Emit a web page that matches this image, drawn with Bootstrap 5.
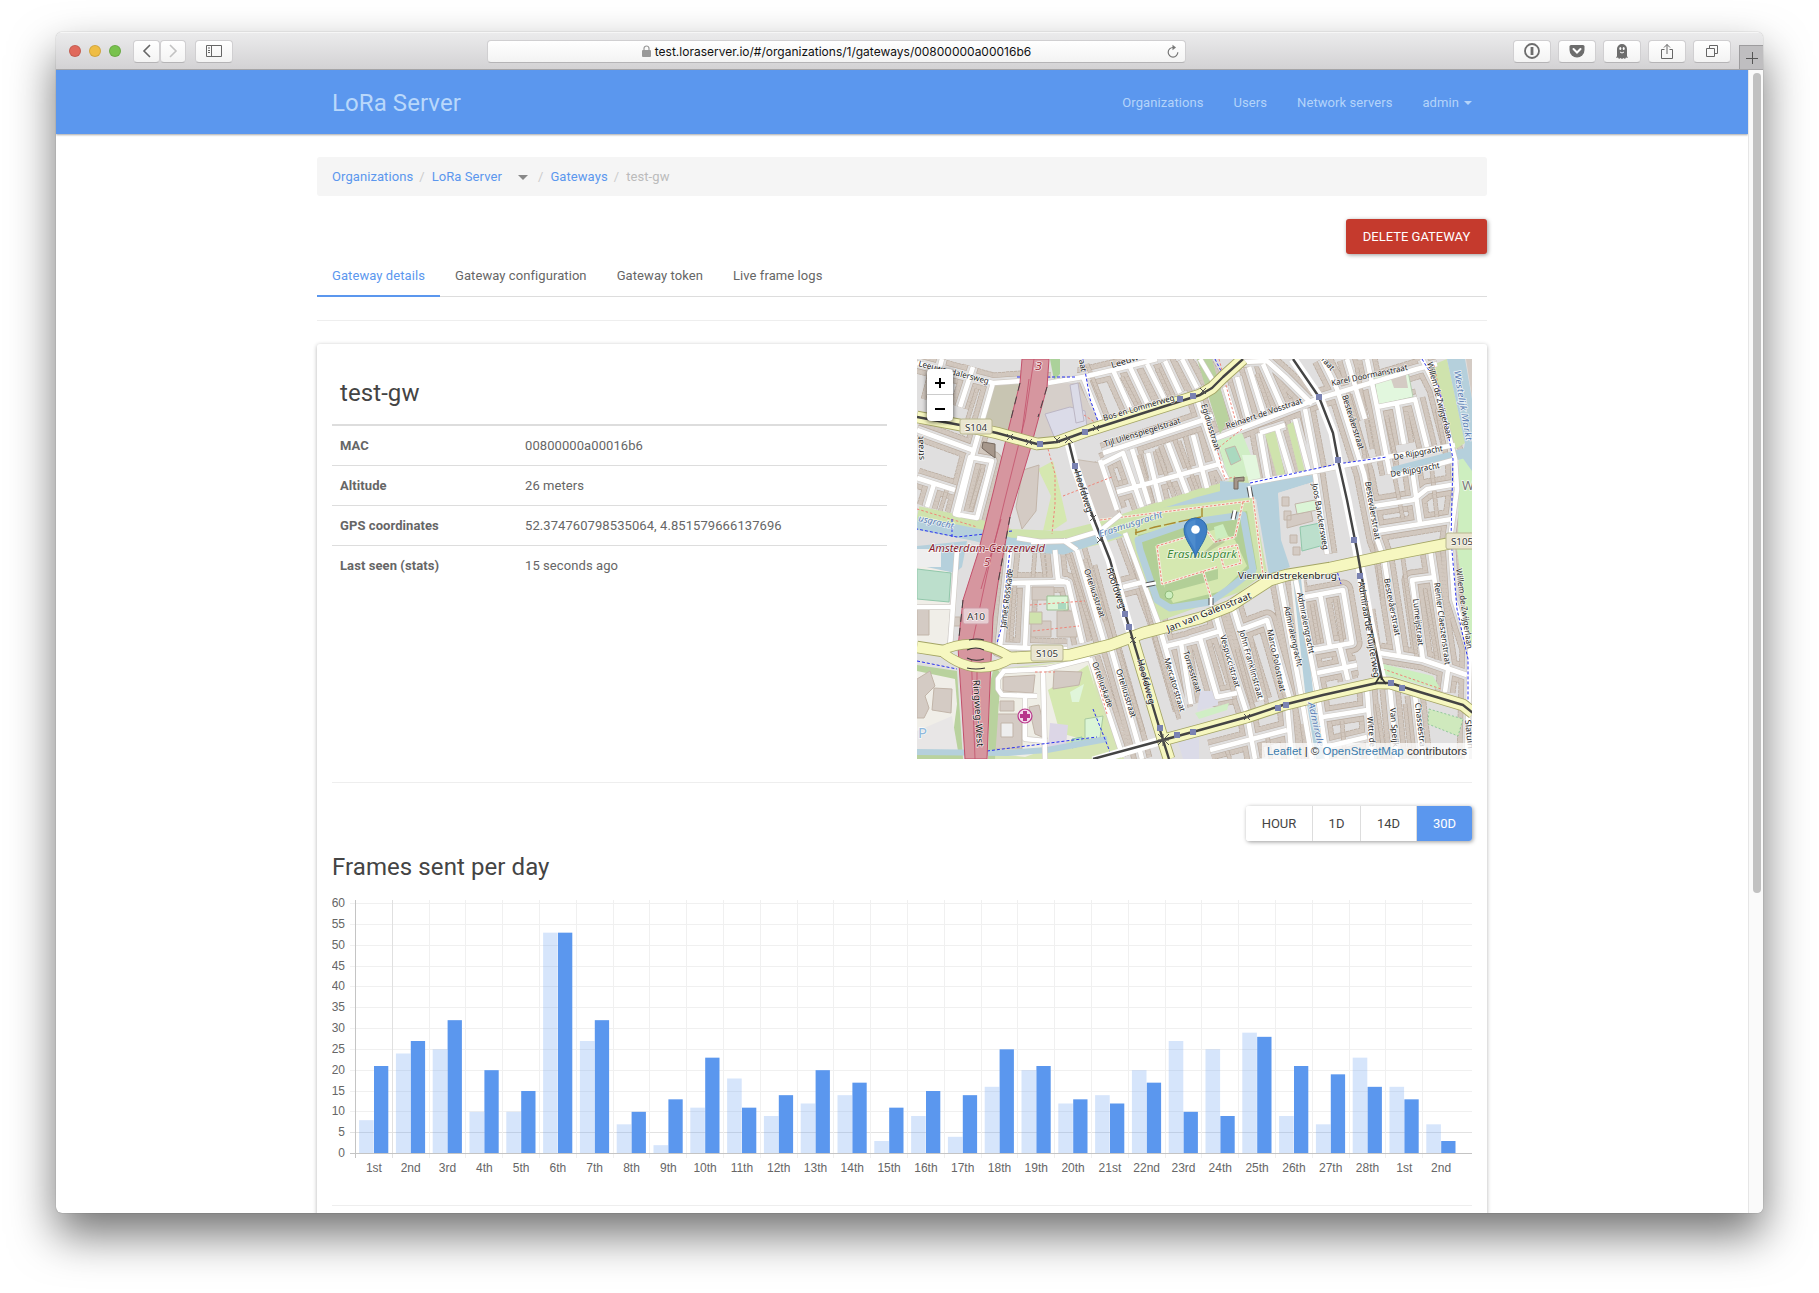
<!DOCTYPE html>
<html lang="en">
<head>
<meta charset="utf-8">
<title>LoRa Server</title>
<link href="https://cdn.jsdelivr.net/npm/bootstrap@5.3.0/dist/css/bootstrap.min.css" rel="stylesheet">
<style>
body{background:#fff;overflow:hidden;height:1293px;font:13px/24px Roboto,sans-serif;letter-spacing:.08px;color:#666}
.app-window{margin:32px 0 0 56px;width:1707px;height:1181px;border-radius:6px;overflow:hidden;background:#fff;box-shadow:0 0 1px rgba(0,0,0,.5),0 22px 45px rgba(0,0,0,.55)}
.chrome-bar{height:38px;background:linear-gradient(#ebebec,#d3d2d4);border-top:1px solid #f6f6f6;border-bottom:1px solid #a5a4a6;padding-left:13px;letter-spacing:0}
.light{width:12px;height:12px;border-radius:50%;margin-right:8px;border:1px solid rgba(0,0,0,.12)}
.cbtn{height:23px;border-radius:4px;background:linear-gradient(#fff,#f3f3f3);border:1px solid #d0cfd1;border-bottom-color:#b5b4b6;display:flex;align-items:center;justify-content:center}
.cbtn svg,.plus-tab svg{display:block}
.url-bar{width:699px;position:relative;font:12px Inter,sans-serif;color:#111}
.url-bar .reload{position:absolute;right:4px;top:3px}
.plus-tab{width:24px;height:24px;background:#bfbec0;border:1px solid #9d9c9e;border-width:1px 0 0 1px}
.viewport{height:1143px}
.page{width:1692px;overflow:hidden}
.scroll-track{width:15px;background:#fafafa;border-left:1px solid #e6e6e6;padding:3px 3px 0 4px}
.thumb{height:820px;width:8px;border-radius:4px;background:#c1c1c1}
.container{max-width:1170px;padding:0}
.navbar{height:64px;background:#5b97ee;padding:2px 0 0;box-shadow:0 1px 2px rgba(0,0,0,.35);position:relative}
.navbar-brand{font-size:24px;color:#b9d8fb!important;margin:0;padding:0 15px}
.navbar .nav-link{color:#b4d4fa!important;padding:0 15px!important}
.dropdown-toggle::after{vertical-align:2px;margin-left:5px;border-width:4px 4px 0}
.breadcrumb{background:#f5f5f5;height:39px;border-radius:3px;margin:23px 0;padding:8px 15px;line-height:23px}
.breadcrumb a,.nav-tabs .active{color:#5b97ee!important;text-decoration:none}
.breadcrumb-item+.breadcrumb-item{padding-left:6px}
.breadcrumb-item+.breadcrumb-item::before{color:#ccc;padding-right:7px}
.breadcrumb-item.active{color:#bbb}
.tri{border:5px solid transparent;border-top-color:#888;border-bottom:0;display:inline-block;vertical-align:middle;margin:0 4px 0 16px}
.btn{font-size:13px;text-transform:uppercase;border:0;height:35px;padding:0 15px;letter-spacing:0;line-height:35px;border-radius:3px}
.btn-danger{background:#c53a2d;box-shadow:1px 1px 4px rgba(0,0,0,.4);width:141px}
.nav-tabs{border-bottom:1px solid #ddd;height:43px}
.nav-tabs .nav-link{color:#666;border:0;padding:10px 15px 9px;height:43px;border-radius:0;margin:0}
.nav-tabs .nav-link.active{background:none;box-shadow:inset 0 -2px 0 #5b97ee}
hr{border-top:1px solid #eee;opacity:1;margin:23px 0}
.card{border:0;border-radius:3px;box-shadow:0 1px 4px rgba(0,0,0,.3);padding:15px;height:900px;color:#666}
h2,h3{font-size:24px;font-weight:400;color:#444;line-height:26px}
h2{margin:21px 0 18px 8px}
h3{margin:13px 0 18px}
.table{--bs-table-color:#666;border-top:2px solid #ddd;margin:0}
.table td,.table th{height:40px;padding:8px;line-height:23px;border-bottom:1px solid #ddd;background:none;color:#666}
.table tr:last-child>*{border-bottom:0}
.table th{width:185px;font-weight:700}
.map-box{width:555px;height:400px;position:relative;overflow:hidden;background:#e0dfdf}
.zoom-ctl{position:absolute;left:10px;top:10px;width:26px;background:#fff;border-radius:4px;box-shadow:0 1px 5px rgba(0,0,0,.65);height:52px}
.zoom-ctl div{height:26px;display:flex;align-items:center;justify-content:center;padding-top:2px}
.zoom-ctl div:first-child{border-bottom:1px solid #ccc}
.attrib{position:absolute;right:0;bottom:0;background:rgba(255,255,255,.75);font:11.5px/16px "Liberation Sans",sans-serif;letter-spacing:0;color:#333;padding:0 5px}
.attrib span{color:#3a7cad}
.btn-group{box-shadow:1px 1px 4px rgba(0,0,0,.4);border-radius:3px}
.btn-group .btn{background:#fff;color:#444;border-right:1px solid #ddd;padding:0;margin:0!important}
.btn-group .btn.active{background:#5b97ee;color:#fff;border:0}
.map-box path,.map-box polygon{stroke-linejoin:round}
.map-box text{font-family:"Noto Sans",sans-serif;letter-spacing:0;paint-order:stroke;stroke-width:1.4px;stroke:rgba(255,255,255,.75)}
.chart text{font:12px "Liberation Sans",sans-serif;letter-spacing:0;fill:#666}
</style>
<script src="https://cdn.jsdelivr.net/npm/bootstrap@5.3.0/dist/js/bootstrap.bundle.min.js"></script>
</head>
<body>
<div class="app-window">
 <div class="chrome-bar d-flex align-items-center">
  <div class="light" style="background:#e0695c"></div><div class="light" style="background:#efbd45"></div><div class="light" style="background:#78c24d;margin-right:12px"></div>
  <div class="cbtn" style="width:27px"><svg width="10" height="16" fill="none" stroke="#666" stroke-width="1.6"><path d="M8 2L2 8l6 6"/></svg></div>
  <div class="cbtn" style="width:26px"><svg width="10" height="16" fill="none" stroke="#c2c2c2" stroke-width="1.6"><path d="M2 2l6 6-6 6"/></svg></div>
  <div class="cbtn" style="width:38px;margin-left:9px"><svg width="16" height="12" fill="none" stroke="#666"><path d="M.5.5h15v11H.5zM5.5 0v12M2 3h2M2 5.500h2M2 7.500h2"/></svg></div>
  <div class="cbtn url-bar" style="margin-left:254px"><svg width="9" height="12" class="me-1"><rect y="5" width="9" height="7" rx="1" fill="#999"/><path d="M2 5.500V3.500a2.500 2.500 0 0 1 5 0v2" fill="none" stroke="#999" stroke-width="1.200"/></svg><span id="url">test.loraserver.io/#/organizations/1/gateways/00800000a00016b6</span>
   <svg class="reload" width="15" height="16" fill="none" stroke="#777" stroke-width="1.200"><path d="M7 3.500a4.800 4.800 0 1 0 4.800 4.800"/><path d="M6.500.7l3.500 2.800-3.500 2.800z" fill="#777" stroke="none"/></svg></div>
  <div class="cbtn" style="width:38px;margin-left:327px"><svg width="18" height="18" fill="none" stroke="#6d6d6d"><circle cx="9" cy="9" r="7" stroke-width="1.800"/><path d="M9 5v8" stroke-width="2.800"/></svg></div>
  <div class="cbtn" style="width:38px;margin-left:7px"><svg width="18" height="16"><path d="M3 2h12q1.500 0 1.500 1.500V7A7.500 7.500 0 0 1 1.500 7V3.500Q1.500 2 3 2z" fill="#6d6d6d"/><path d="M5.500 6L9 9.500 12.500 6" fill="none" stroke="#fff" stroke-width="2" stroke-linecap="round"/></svg></div>
  <div class="cbtn" style="width:38px;margin-left:7px"><svg width="14" height="17"><path d="M2 6a5 5 0 0 1 10 0v7l1 2-2-.5-1 1.500-1.500-1L7 16l-1.500-1L4 16l-1-1.500L1 15l1-2z" fill="#6d6d6d"/><ellipse cx="5.300" cy="5.500" rx="1" ry="1.600" fill="#fff"/><ellipse cx="8.700" cy="5.500" rx="1" ry="1.600" fill="#fff"/><path d="M5 9q2 2 4 0" stroke="#fff" fill="none"/></svg></div>
  <div class="cbtn" style="width:38px;margin-left:7px"><svg width="14" height="17" fill="none" stroke="#666"><path d="M4.500 6.500h-3v9h11v-9h-3M7 11V1.500M4 4.500l3-3 3 3"/></svg></div>
  <div class="cbtn" style="width:38px;margin-left:7px"><svg width="14" height="14" fill="none" stroke="#666"><path d="M1.500 4.500h8v8h-8zM4.500 4V1.500h8v8H10"/></svg></div>
  <div class="plus-tab ms-auto align-self-end d-flex align-items-center justify-content-center"><svg width="12" height="12" stroke="#555"><path d="M0 6.500h12M6.500 0v12"/></svg></div>
 </div>
 <div class="viewport d-flex">
  <div class="page">
   <nav class="navbar navbar-expand"><div class="container"><a class="navbar-brand">LoRa Server</a>
    <div class="navbar-nav"><a class="nav-link">Organizations</a><a class="nav-link">Users</a><a class="nav-link">Network servers</a><a class="nav-link dropdown-toggle">admin</a></div></div></nav>
   <div class="container">
    <ol class="breadcrumb"><li class="breadcrumb-item"><a>Organizations</a></li><li class="breadcrumb-item"><a>LoRa Server</a><span class="tri"></span></li><li class="breadcrumb-item"><a>Gateways</a></li><li class="breadcrumb-item active">test-gw</li></ol>
    <div class="d-flex justify-content-end"><button class="btn btn-danger">Delete gateway</button></div>
    <ul class="nav nav-tabs"><li><a class="nav-link active">Gateway details</a></li><li><a class="nav-link">Gateway configuration</a></li><li><a class="nav-link">Gateway token</a></li><li><a class="nav-link">Live frame logs</a></li></ul>
    <hr>
    <div class="card">
     <div class="d-flex justify-content-between">
      <div style="width:555px"><h2>test-gw</h2>
       <table class="table"><tbody><tr><th>MAC</th><td>00800000a00016b6</td></tr><tr><th>Altitude</th><td>26 meters</td></tr><tr><th>GPS coordinates</th><td>52.374760798535064, 4.851579666137696</td></tr><tr><th>Last seen (stats)</th><td>15 seconds ago</td></tr></tbody></table></div>
      <div class="map-box">
<svg width="555" height="400" viewBox="0 0 555 400" fill="none">
<defs>
<g id="res">
<path d="M0 4L76 24 105 22M76 24L56 94 40 158M0 71L58 92M0 119L38 131M17 125L10 148M43 48L56 8M25 0L14 42M53 98L75 102 60 159 38 155z"/>
<path d="M131 24L166 18 200 10 240 0M166 18L186 68M196 11L213 49M213 8L230 44M230 5L247 39M248 2L263 34M265 0L280 29M283 0L296 22"/>
<path d="M186 94L283 62 296 57M186 104L206 94 225 148M200 133L306 104M231 94L243 143M251 84L270 134M276 76L290 129M215 90L232 145M183 101L200 151"/>
<path d="M280 40L302 105 310 120M297 80L400 40 500 10 520 5M308 28L320 66M320 18L332 62M332 8L347 56M346 5L365 48M326 3L350 2 368 18 395 45M343 74L351 119M343 74L368 66M360 69L374 116M378 60L392 113M388 50L400 112"/>
<path d="M405 0L420 30 447 115 460 180 467 200 482 295M430 0L448 60M450 0L460 48 473 115M460 48L500 40M480 46L487 85M498 40L510 88M505 0L520 30 538 100 540 130 533 180 537 240 553 290 550 400M495 110L503 164M458 147L496 141 510 130 540 125M460 172L535 160M398 115L410 195"/>
<path d="M388 238L426 231 435 284 396 291M403 235L413 288M400 314L440 306M423 288L431 321M363 223L383 330 395 400M378 217L400 330 410 400M316 248L323 271 350 261 373 341M323 271L345 341M273 281L303 272 298 254M283 279L300 338 320 334M303 272L330 355M331 361L338 400M293 391L370 371M370 345L375 400M406 358L450 351M450 330L455 400M408 388L450 378M473 330L480 400M498 336L505 400M463 294L506 301 550 316M518 218L495 221 506 301M513 191L531 311 528 333"/>
<path d="M160 191L187 283M193 286L222 388 225 400M138 191L141 221 151 224 165 284M93 224L151 223M111 224L108 288M93 191L83 288 150 290M173 299L206 398M206 228L226 223M208 174L241 263 266 350M246 288L283 279M264 284L274 345M146 181L160 191"/>
</g>
<path id="rows" d="M201 152L216 200 240 285 262 360M178 206L204 300 226 372M168 200L188 262M150 192L172 262M430 30L446 85 456 160 466 240M412 60L436 160 450 240M388 130L396 185M440 10L455 90M520 50L530 100M470 60L480 105M478 120L486 160M515 112L520 158M456 250L462 290M486 200L500 300M508 230L520 300M305 285L318 340M335 285L350 345M320 290L335 345M355 290L368 338M395 245L402 285M418 240L425 284M460 345L468 400M488 345L494 400M425 362L428 400M385 365L390 400M350 375L354 400M310 392L313 400M205 18L224 55M240 10L256 45M170 5L184 40M240 90L258 140M222 96L236 144M262 82L280 130M310 35L322 70M340 15L356 60M30 30L22 60M60 30L50 62M66 110L54 150M30 130L22 156M98 225L94 282M125 192L128 218M118 192L116 218"/>
<g id="edge"><path d="M173 299L130 310 87 312 81 320 81 330 85 336 120 337M126 311L128 400M40 191L33 288M0 248L36 248M108 337V380L128 382M114 183L150 182 183 172 204 155M470 98L538 86M475 118L540 100M333 124L400 112 470 98M100 179L125 183"/></g>
<path id="a10" d="M105 0L103 24 93 64 76 134 61 194 46 241 41 288 45 351 48 400H70L73 324 76 258 81 224 93 158 113 91 130 28 132 0z"/>
<path id="yel" d="M0 58L43 66 80 74 120 85 140 83 173 71 283 36 295 29 306 18 326 0M93 299L153 296 193 286 226 274 283 259 313 247 333 234 353 221 370 216 413 209 473 196 555 180M216 281L246 381 252 400M246 381L283 371 330 358 366 346 406 336 460 324 473 324 506 334 546 346 556 354M0 288L26 292"/>
<path id="tram" d="M0 58L43 66 80 74 120 85 140 83 173 71 283 36 295 29 306 18 326 0M152 84L158 108 176 158 193 201 208 254 216 281 246 381 252 400M176 400L246 381 283 371 330 358 366 346 406 336 460 324 473 324 506 334 546 346 556 354M376 0L402 38 416 74 421 101 430 141 440 191 453 264 465 321"/>
</defs>
<!-- residential blocks -->
<use href="#res" stroke="#b8aa9d" stroke-width="21" stroke-dasharray="3.500 .5"/><use href="#res" stroke="#d2c8bf" stroke-width="19.500" stroke-dasharray="3.500 .5"/><use href="#res" stroke="#b8aa9d" stroke-width="11"/><use href="#res" stroke="#e0dfdf" stroke-width="9.800"/>
<use href="#rows" stroke="#b8aa9d" stroke-width="4.600" stroke-dasharray="3.500 .5"/><use href="#rows" stroke="#d2c8bf" stroke-width="3.200" stroke-dasharray="3.500 .5"/>
<!-- land use -->
<path d="M76 23L106 25 93 75 66 66z" fill="#c8c5b2"/><path d="M108 25L160 24 186 70 140 82 118 84z" fill="#d6cfca"/><path d="M134 0H160V18L134 20z" fill="#e0dfdf"/>
<path d="M128 55L153 48 168 52 170 68 138 80z" fill="#dbdbe8" stroke="#bcb6c4"/><path d="M153 26l8-2 6 38-8 2z" fill="#dbdbe8" stroke="#bcb6c4"/><path d="M133 0h10v15l-6 6z" fill="#abd19a"/>
<path d="M121 110l15-8 6 25 8 35-12 8-12 2 8-35z" fill="#d5e8b0"/><path d="M156 100L183 104 203 158 180 162z" fill="#d6cfca" stroke="#c6bbb0"/><path d="M99 148l7-37 16-5-3 46-14 18z" fill="#d4cbc4" stroke="#c2b5a9"/>
<path d="M66 83l12 2v14l-8-6-5-4z" fill="#a6978b" stroke="#75685e"/>
<path d="M0 188H32V250H0zM0 250H33L30 285H0z" fill="#f0eee8"/><path d="M0 210l34 4-2 29-32-3z" fill="#bcdfcc" stroke="#91c7aa"/><path d="M0 187L50 182 45 208 38 214 0 206z" fill="#b5d0dc"/><path d="M0 190h24v18H0z" fill="#eee"/><path d="M0 250h12v26H0zM36 258h7v9h-7z" fill="#d4cbc4" stroke="#c2b5a9"/>
<path d="M0 306L40 312 46 400H0z" fill="#b9d29e"/><path d="M0 312L38 320 40 345 34 392H0z" fill="#f0eee8"/><path d="M0 320l13-8 5 15-10 10 4 12-5 10H0zM17 329l18 1-1 24-19-3z" fill="#d4cbc4" stroke="#c2b5a9"/><path d="M0 372l35-15 6 35H0z" fill="#e8e6e6"/>
<path d="M77 310L172 300 207 400H72z" fill="#d6e5b4"/><path d="M80 312l92-12 7 36-16 42-55 20-28-3z" fill="#efeee6"/><path d="M131 331l40-25 18 60-10 18-36-10z" fill="#d5e8b0"/><path d="M153 333l14-8-5 18-7 0z" fill="#e0f5da"/><path d="M168 360l18-3-3 22-15 2z" fill="#dbf5d6" stroke="#a9c9a0"/><path d="M86 318l32-2-2 18-30-2zM137 312l28 1-3 13-26 4zM75 355h30v35H75zM83 342h14v10H83z" fill="#d4cbc4" stroke="#c2b5a9"/><path d="M84 364h12v14H84z" fill="#eee" stroke="#c2b5a9"/><path d="M112 348l10-2 8 34-12-5z" fill="#d4cbc4" stroke="#c2b5a9"/><path d="M133 364l18 2-2 20-18 4z" fill="#dcd6e6"/><path d="M155 380l10-2v8l-10 3z" fill="#bcdfcc" stroke="#91c7aa"/>
<path d="M115 228h22v13h-22zM114 262h20v16h-20zM140 252h20v26h-20z" fill="#d4cbc4" stroke="#c2b5a9"/><path d="M112 253h13v12h-13z" fill="#cfe3ad" stroke="#c2b5a9"/><path d="M130 237h21v14h-21z" fill="#dbf5d6" stroke="#9cbd93"/><path d="M141 244h8v6h-8z" fill="#aad9bf"/>
<path d="M73 324L77 308 84 314 78 400H71z" fill="#b9d29e"/><path d="M280 0H295L312 60 303 75z" fill="#b9d29e"/><path d="M300 82l25-8 18 45-30 5z" fill="#d0eec5"/><path d="M308 90l10-3 6 14-10 5z" fill="#aad9bf" stroke="#c2b5a9"/><path d="M325 96h14l5 25-12 3z" fill="#e3f7de"/><path d="M348 75l10-3 10 44-8 1zM370 66l6-3 12 50-6 1z" fill="#cfe3ad"/>
<path d="M457 18l34-6 5 26-35 8z" fill="#e2f7de" stroke="#b6cdb0"/><path d="M473 17l15-6 3 18-14 0z" fill="#d4cbc4"/><path d="M513 7L530 0 548 84 536 92z" fill="#cfe3ad"/><path d="M542 95h13V180h-14z" fill="#cdeebf"/><path d="M540 190h15v110z" fill="#cdeebf"/>
<path d="M466 305l50 12 8 14-58-16z" fill="#cdeebf"/><path d="M512 350l34 10-5 17-30-12z" fill="#cfe9bd" stroke="#91c79a" stroke-dasharray="2 2"/><path d="M278 354l34-10-2 7-28 9z" fill="#d0eec5"/><path d="M283 332l18 0v14l-21 6z" fill="#dbdbe8"/><path d="M260 380l22-6v26h-16z" fill="#dbdbe8"/>
<!-- water and park -->
<path d="M0 158L60 171 93 181 146 183 186 173 243 154 283 141 333 128" stroke="#cfe3ad" stroke-width="22"/><path d="M0 164L60 176 93 185 146 189 186 176 243 157 283 144 333 131" stroke="#b5d0dc" stroke-width="13"/>
<path d="M303 122L333 124 396 116V123L361 134 364 181 373 208 352 216 339 140 303 145z" fill="#b5d0dc"/>
<path d="M183 166L233 150 336 138 350 213 323 233 240 263 210 178z" fill="#cfe3ad"/><path d="M221 176L330 152 340 210 300 240 250 251 235 240z" fill="#b2cf97"/><path d="M238 187L300 170 318 181 330 207 305 232 256 244 246 225z" fill="#d5e8b0"/><path d="M247 224l54-14v10l-52 14z" fill="#b2cf97"/><path d="M297 168l9-3 5 12-12 4z" fill="#cdeebf"/><circle cx="252" cy="236" r="4" fill="#cdeebf" stroke="#92bb7b"/>
<path d="M221 181L270 164 326 156 336 211 313 229 293 243 253 249 240 241 223 191z" stroke="#b5d0dc" stroke-width="7"/>
<path d="M336 138L346 215M183 161L333 142M240 187L245 225 252 223 300 208M240 187L290 172 298 183 318 178M286 212L295 242M302 190l18-4 4 18-17 5zM326 143L318 178" stroke="#f2efdf" stroke-width="2.600"/><path d="M336 138L346 215M183 161L333 142M240 187L245 225 252 223 300 208M240 187L290 172 298 183 318 178M286 212L295 242M302 190l18-4 4 18-17 5zM326 143L318 178" stroke="#f08478" stroke-dasharray="2.500 1.600"/>
<path d="M218 174L238 168 284 158M219 170V176M285 149V158" stroke="#a98a2e" stroke-width="1.400" stroke-dasharray="12 3"/>
<path d="M361 134L396 123 410 195 373 208z" fill="#e0dfdf"/><path d="M365 138h7v9h-7zM367 152h7v9h-7zM370 157l24-5 2 10-26 7zM373 176h7v8h-7zM376 188h7v8h-7z" fill="#d4cbc4" stroke="#c2b5a9"/><path d="M378 145l20-4 2 10-20 4z" fill="#dbf5d6" stroke="#c2b5a9"/><path d="M383 168l20-4 4 22-22 6z" fill="#bcdfcc" stroke="#91c7aa"/><path d="M317 119l10-1v4h-6v8h-4z" fill="#a6978b" stroke="#75685e"/>
<path d="M380 220L392 332 403 400" stroke="#f2f1ee" stroke-width="13"/><path d="M380 220L392 332 403 400" stroke="#b5d0dc" stroke-width="8"/><path d="M475 113L548 94" stroke="#b5d0dc" stroke-width="10"/><path d="M530 0H548L555 40V112L545 98 548 84z" fill="#b5d0dc"/><path d="M549 0h6v38z" fill="#d4cbc4"/><path d="M0 393L90 394 130 391 190 380" stroke="#b5d0dc" stroke-width="6"/>
<!-- streets -->
<use href="#res" stroke="#cfcac4" stroke-width="5.800"/><use href="#edge" stroke="#cfcac4" stroke-width="5.800"/><use href="#res" stroke="#fff" stroke-width="4.600"/><use href="#edge" stroke="#fff" stroke-width="4.600"/>
<path d="M0 150L60 168 M131 90L138 115 138 145 135 175M146 137L195 118M167 56L182 66M302 0L318 60 M113 246L168 242M116 272L162 267M325 70L300 90 308 120 318 118M517 6L532 80 M466 310L524 330M118 313h20M176 305L190 355" stroke="#f08478" stroke-dasharray="2.500 2"/>
<path d="M166 0L173 40 182 65M95 172L40 178 0 170M35 160V180M93 191L84 270 80 284M0 302L40 310M100 18H160M333 124L420 105 470 98M505 0L522 28 536 100 534 180 540 250 551 300V345M419 209L424 225M176 350L195 398M70 392L180 378M298 0l10 20" stroke="#2830f0" stroke-dasharray="3 2"/>
<use href="#a10" fill="#d6969f" stroke="#c3506b"/><path d="M117 0L108 60 88 140 70 215 54 290 58 400M84 160L64 230M60 310V380M112 20l-8 60" stroke="#c3506b" stroke-width=".8"/><path d="M103 24L93 64 M130 28L121 58 M93 158L81 224 M46 241L41 288" stroke="#444" stroke-dasharray="8 6"/>
<path d="M152 84L158 108 176 158 193 201 208 254 216 281M176 402L246 381M376 0L402 38 416 74 421 101 430 141 440 191 453 264 465 321" stroke="#fff" stroke-width="9"/>
<path d="M24 292Q59 275 95 299Q59 321 24 292" stroke="#a4a565" stroke-width="10"/><use href="#yel" stroke="#a4a565" stroke-width="12.500"/><use href="#yel" stroke="#f6f7c0" stroke-width="10.800"/><path d="M24 292Q59 275 95 299Q59 321 24 292" stroke="#f6f7c0" stroke-width="8.500"/>
<path d="M50 291q9-4 17 0v9q-9 3-17-1z" fill="#d6969f"/><path d="M50 291q9-4 17 0M50 299q8 4 17 1M52 281q8-2 15 0M50 309q9 2 18 0" stroke="#333" stroke-width="1.100"/>
<use href="#tram" stroke="#444" stroke-width="2.400"/>
<path d="M90 75l6 6m0-6l-6 6M109 80l6 6m0-6l-6 6M137 78l6 6m0-6l-6 6M148 76l8 8m0-8l-8 8M176 66l6 6m0-6l-6 6M173 156l6 6m0-6l-6 6M180 178l6 6m0-6l-6 6M213 278l6 6m0-6l-6 6M327 355l6 6m0-6l-6 6M283 29l6 6m0-6l-6 6M241 375l11 11m0-11l-11 11M241 381h11M246 375v12" stroke="#555"/>
<path d="M120 82h6v6h-6zM165 70h6v6h-6zM260 37h6v6h-6zM273 34h6v6h-6zM155 104h6v6h-6zM399 35h6v6h-6zM418 98h6v6h-6zM434 178h6v6h-6zM205 252h6v6h-6zM209 265h6v6h-6zM240 366h6v6h-6zM257 373h6v6h-6zM273 370h6v6h-6zM358 346h6v6h-6zM366 343h6v6h-6zM471 321h6v6h-6zM482 326h6v6h-6zM440 214h6v6h-6z" fill="#7a82b2"/>
<path d="M458 325l5-8 6 8" stroke="#333" stroke-width="1.600"/>
<path d="M332 128l2 10M318 152l-2 8M229 226l9-2M294 239v7" stroke="#555" stroke-width="5"/><path d="M332 127l2 12M318 151l-2 10M228 226l11-2M294 238v9" stroke="#fff" stroke-width="3"/>
<circle cx="108" cy="357" r="7" fill="#f3d9ea" stroke="#b8368b" stroke-width="1.200"/><path d="M108 352v10M103 357h10" stroke="#b8368b" stroke-width="4"/>
<g fill="#e9e5cf" stroke="#b9b790"><rect x="43" y="60" width="32" height="15" rx="2"/><rect x="114" y="286" width="32" height="16" rx="2"/><rect x="529" y="174" width="32" height="16" rx="2"/><rect x="46" y="249" width="26" height="16" rx="2" fill="#e6cdd2" stroke="#cf9aa5"/></g>
<g id="labels"></g>
<g transform="translate(266 158)"><path d="M16 40L36 21 42 25z" fill="#000" opacity=".12"/><path d="M12.500 40.500C11 32 1 23 1 12.500a11.500 11.500 0 0 1 23 0C24 23 14 32 12.500 40.500z" fill="#3f7fc6" stroke="#2e6ba6"/><path d="M12.500 35C11 28 3 20 3 12a9.500 9.500 0 0 1 9.500-9z" fill="#5794d2" opacity=".6"/><circle cx="12.500" cy="12.500" r="4.300" fill="#fff"/></g>
</svg>
       <div class="zoom-ctl"><div><svg width="12" height="12" stroke="#000" stroke-width="2"><path d="M1 6h10M6 1v10"/></svg></div><div><svg width="12" height="12" stroke="#000" stroke-width="2"><path d="M1 6h10"/></svg></div></div>
       <div class="attrib"><span>Leaflet</span> | © <span>OpenStreetMap</span> contributors</div>
      </div>
     </div>
     <hr>
     <div class="d-flex justify-content-end"><div class="btn-group"><button class="btn" style="width:67px">Hour</button><button class="btn" style="width:48px">1D</button><button class="btn" style="width:56px">14D</button><button class="btn active" style="width:55px">30D</button></div></div>
     <h3>Frames sent per day</h3>
     <svg class="chart d-block" id="chart" width="1140" height="284"></svg>
     <hr style="margin:23px 0">
    </div>
   </div>
  </div>
  <div class="scroll-track"><div class="thumb"></div></div>
 </div>
</div>
<script>
// street labels: text, baseline start, baseline end, size, colour, italic
const L=[["Leeuwendalersweg",1,7,71,25],["Leeuw",195,9,222,1],["Bos en Lommerweg",187,62,258,41],["Tijl Uilenspiegelstraat",188,88,264,64],["Hoofdweg",157,113,170,154,9.5],["Erasmusgracht",183,178,246,158,9,"#5b7fb5",1],["usgracht",1,162,36,170,9,"#5b7fb5",1],["Amsterdam-Geuzenveld",12,193,128,193,10.5,"#8b1a2b",1],["5",67,207,73,207,10,"#a03040",1],["3",118,11,125,11,10,"#a03040",1],["straat",7,101,6,77],["aat",162,1,164,13],["Egidiusstraat",284,46,298,92],["Reinaert de Vosstraat",310,70,386,44],["Karel Doormanstraat",415,27,491,11],["Bestevåerstraat",425,37,442,91],["Bestevåerstraat",448,123,458,181],["Joos Banckersweg",395,125,406,191],["Willem de Zwijgerlaan",510,4,530,80],["Westelijk Markt",537,12,549,82,9,"#5b7fb5",1],["De Rijpgracht",477,101,526,92],["De Rijpgracht",474,118,523,109],["W",545,131,557,131,13,"#777"],["raat",404,1,414,12],["Orteliusstraat",167,211,183,259],["Hoofdweg",189,210,203,250,9.5],["Hoofdweg",220,301,232,346,9.5],["James Rosskade",89,269,96,210],["Orteliuskade",175,304,191,349],["Orteliusstraat",199,311,214,359],["Mercatorstraat",247,300,263,353],["Torresstraat",266,293,279,334],["Ringweg-West",56,321,60,388,9.5],["Jan van Galenstraat",251,273,335,239,9.5],["Vierwindstrekenbrug",321,220,420,220,9.5],["Erasmuspark",250,199,320,199,11,"#3f8a3a",1],["Admiraal de Ruijterweg",441,223,457,319,9],["Bestevåerstraat",467,220,478,277],["Lumeijstraat",496,240,501,287],["Reinier Claeszenstraat",517,224,528,306],["Willem de Zwijgerlaan",539,210,550,290],["Admiralengracht",380,234,392,295],["Admiralengracht",367,248,380,308],["Marco Polostraat",350,271,363,333],["John Franklinstraat",322,272,341,340],["Vespuccistraat",303,277,318,329],["Witte de",450,358,453,388],["Van Speijk",473,349,476,388],["Chasséstra",498,344,503,388],["Slatuin",548,361,551,390],["Admirale",391,344,401,388,9,"#5b7fb5",1],["S104",48,71.5,70,71.5,9.5,"#333"],["S105",119,298,141,298,9.5,"#333"],["S105",534,186,556,186,9.5,"#333"],["A10",50,261,68,261,9.5,"#333"],["P",1,379,10,379,14,"#8fb8dc"]];
labels.innerHTML=L.map(([t,a,b,c,d,s=8.3,f="#222",i])=>{const n=Math.hypot(c-a,d-b),r=Math.atan2(d-b,c-a)*180/Math.PI;
 return `<text transform="translate(${a} ${b}) rotate(${r})" font-size="${s}" fill="${f}" textLength="${n}" lengthAdjust="spacingAndGlyphs" ${i?'font-style="italic"':''}>${t}</text>`}).join('');
// daily frame counts: received, sent
const D=[[8,21],[24,27],[25,32],[10,20],[10,15],[53,53],[27,32],[7,10],[2,13],[11,23],[18,11],[9,14],[12,20],[14,17],[3,11],[9,15],[4,14],[16,25],[20,21],[12,13],[14,12],[20,17],[27,10],[25,9],[29,28],[9,21],[7,19],[23,16],[16,13],[7,3]];
const names=[...Array(28).keys()].map(i=>{i++;return i+(i%10==1&&i!=11?'st':i%10==2&&i!=12?'nd':i%10==3&&i!=13?'rd':'th')}).concat('1st','2nd');
const y0=255.5,k=250/60,X=23.5,W=36.8;let s='';
for(let v=0;v<=60;v+=5){const y=Math.round(y0-v*k-.5)+.5;s+=`<path d="M18 ${y}H1140" stroke="${v?(v==5?'#e2e2e2':'#f0f0f0'):'#c4c4c4'}"/><text x="13" y="${y+3.5}" text-anchor="end">${v}</text>`}
D.forEach((d,i)=>{const x=Math.round(X+i*W-.5)+.5;s+=`<path d="M${x} 2V260" stroke="${i?(i==1?'#e0e0e0':'#f0f0f0'):'#c4c4c4'}"/>`});
D.forEach((d,i)=>{const x=X+i*W+3.6;s+=`<rect x="${x}" y="${y0-d[0]*k}" width="14.6" height="${d[0]*k}" fill="#5b97ee" fill-opacity=".25"/><rect x="${x+14.9}" y="${y0-d[1]*k}" width="14.3" height="${d[1]*k}" fill="#5b97ee"/><text x="${X+i*W+18.4}" y="274" text-anchor="middle">${names[i]}</text>`});
chart.innerHTML=s+`<path d="M23 255.500H1140" stroke="#c4c4c4"/>`;
</script>
</body>
</html>
